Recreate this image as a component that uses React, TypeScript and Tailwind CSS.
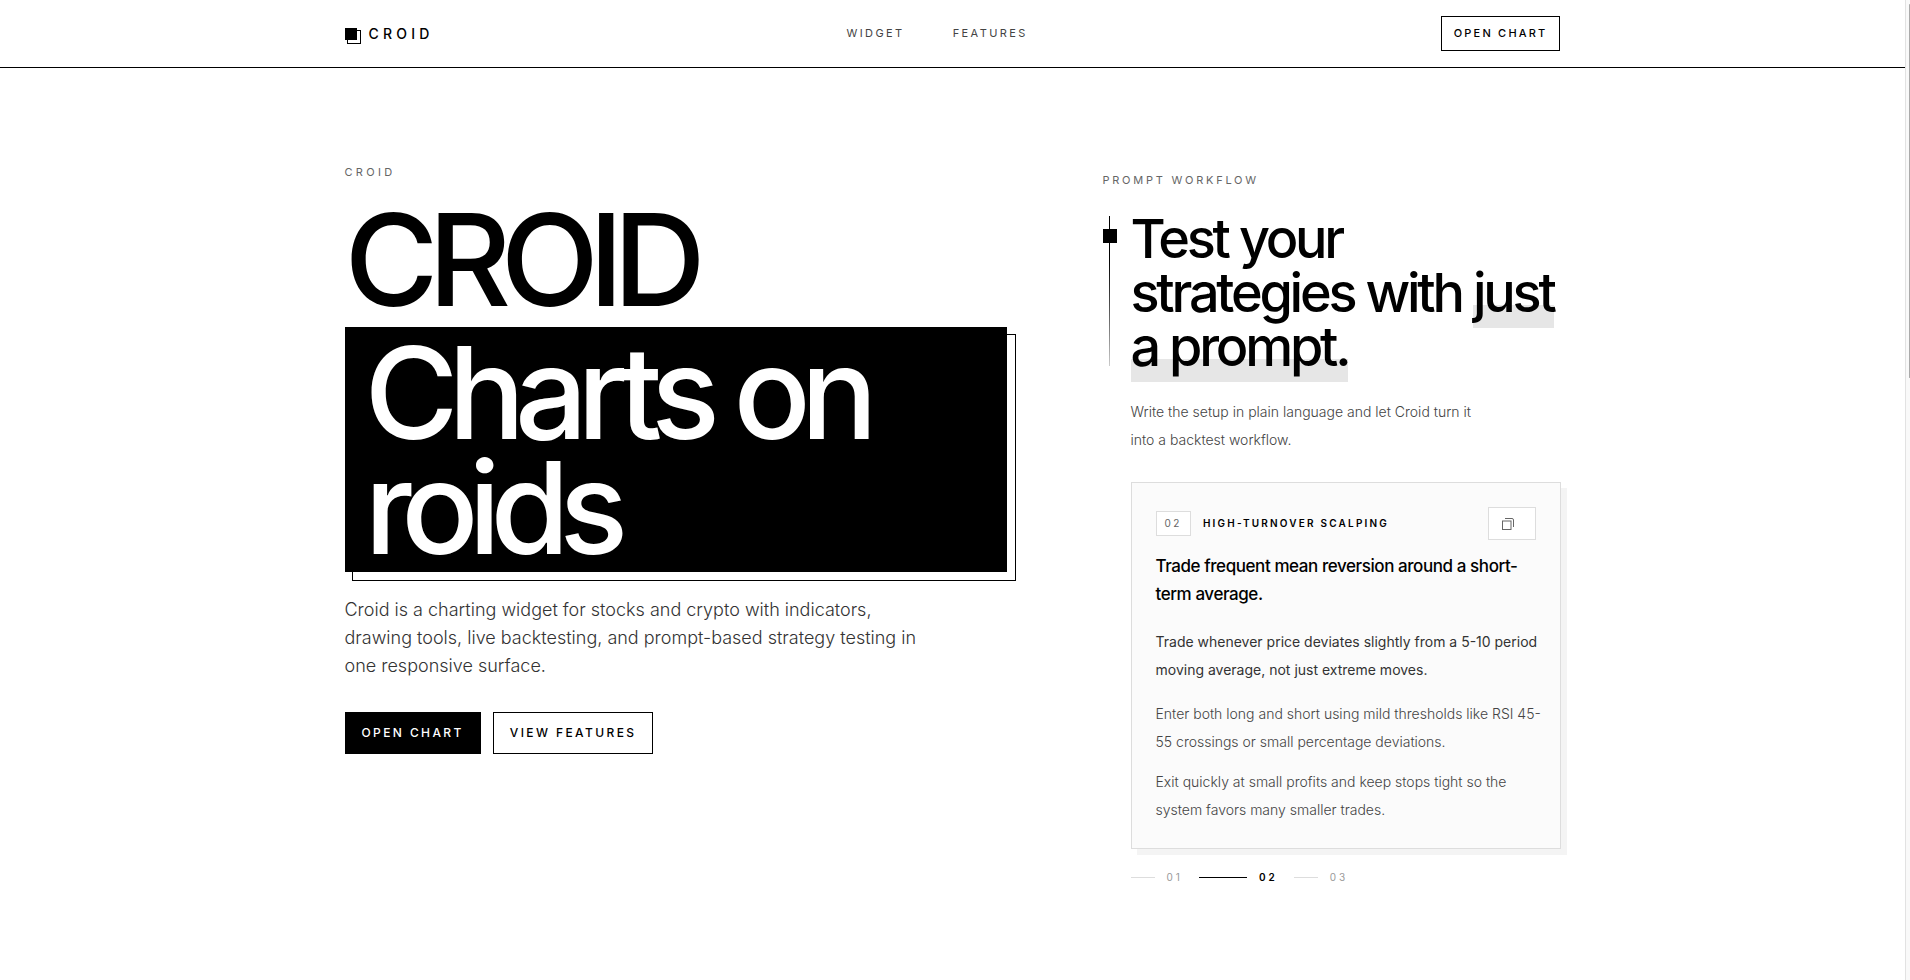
import { useState } from 'react';

const prompts = [
  { id: '01', title: 'TREND' },
  { id: '02', title: 'HIGH-TURNOVER SCALPING' },
  { id: '03', title: 'BREAKOUT' },
];

function Logo() {
  return (
    <a href="#top" className="flex items-end gap-2">
      <svg width="16" height="16" viewBox="0 0 16 16" aria-hidden="true">
        <rect x="2.5" y="2.5" width="13" height="13" fill="none" stroke="#000" />
        <rect width="12" height="12" fill="#000" />
      </svg>
      <span className="text-[14px] leading-5 font-medium tracking-[0.3em]">CROID</span>
    </a>
  );
}

function Header() {
  return (
    <header className="border-b border-black">
      <div className="mx-auto flex max-w-[1280px] items-center justify-between px-8 py-4">
        <Logo />
        <nav className="flex gap-12 text-[11px] tracking-[0.22em] text-[#444]">
          <a href="#widget">WIDGET</a>
          <a href="#features">FEATURES</a>
        </nav>
        <button className="h-[35px] border border-black px-3 text-[11px] font-medium tracking-[0.2em]">OPEN CHART</button>
      </div>
    </header>
  );
}

function Hero() {
  return (
    <div>
      <p className="text-[11px] leading-4 tracking-[0.3em] text-[#666]">CROID</p>
      <h1 className="mt-[22px] text-[128px] leading-[115px] font-medium tracking-[-0.08em]">
        <span className="block">CROID</span>
        <span className="relative mt-[10px] block w-[662px] max-w-full bg-black px-5 pt-2 pb-[7px] text-white before:absolute before:top-[7px] before:-right-[9px] before:-bottom-[9px] before:left-[7px] before:-z-10 before:border before:border-black before:content-['']">
          Charts on roids
        </span>
      </h1>
      <p className="mt-6 max-w-[580px] text-[18px] leading-7 font-light text-[#333]">
        Croid is a charting widget for stocks and crypto with indicators, drawing tools, live backtesting, and prompt-based strategy testing in one responsive surface.
      </p>
      <div className="mt-8 flex gap-3 text-[12px] font-medium">
        <button className="h-[42px] border border-black bg-black px-4 tracking-[0.2em] text-white">OPEN CHART</button>
        <button className="h-[42px] border border-black px-4 tracking-[0.2em]">VIEW FEATURES</button>
      </div>
    </div>
  );
}

function PromptCard({ id, title }: { id: string; title: string }) {
  return (
    <article className="mt-7 border border-[#ddd] bg-[#fbfbfb] py-6 pr-4 pl-6 shadow-[6px_6px_0_#f4f4f4]">
      <div className="flex items-center justify-between pr-2">
        <div className="flex items-center gap-3">
          <span className="border border-[#ddd] bg-white px-2 text-[10px] leading-[23px] tracking-[0.25em] text-[#666]">{id}</span>
          <span className="text-[10px] font-semibold tracking-[0.22em]">{title}</span>
        </div>
        <button aria-label="Copy prompt" className="h-[33px] w-12 border border-[#ddd] bg-white pl-[13px] text-[#666]">
          <svg width="12" height="12" viewBox="0 0 12 12" fill="none" stroke="currentColor" aria-hidden="true">
            <rect x="0.5" y="3" width="8.500" height="8.500" />
            <path d="M3 .5h7q1.5 0 1.5 1.500V9" />
          </svg>
        </button>
      </div>
      <h3 className="mt-3 text-[17px] leading-7 font-medium tracking-tight">Trade frequent mean reversion around a short-term average.</h3>
      <p className="mt-5 text-[14px] leading-7 text-[#333]">
        Trade whenever price deviates slightly from a 5-10 period moving average, not just extreme moves.
      </p>
      <div className="mt-4 space-y-3 text-[14px] leading-7 font-light text-[#444]">
        <p>Enter both long and short using mild thresholds like RSI 45-55 crossings or small percentage deviations.</p>
        <p>Exit quickly at small profits and keep stops tight so the system favors many smaller trades.</p>
      </div>
    </article>
  );
}

function Workflow() {
  const [active, setActive] = useState(1);

  return (
    <div className="pt-2">
      <p className="text-[11px] leading-4 tracking-[0.25em] text-[#666]">PROMPT WORKFLOW</p>
      <div className="mt-6 flex gap-[14px]">
        {/* Rail */}
        <div className="mt-1 flex h-[150px] w-[14px] shrink-0 flex-col items-center">
          <div className="h-[13px] w-px bg-black" />
          <div className="size-[14px] bg-black" />
          <div className="w-px flex-1 bg-linear-to-b from-black to-[#ccc]" />
        </div>
        <div className="min-w-0 flex-1">
          <h2 className="text-[54px] leading-[54px] font-medium tracking-[-0.06em]">
            Test your strategies with{' '}
            <span className="bg-[linear-gradient(transparent_66%,#e6e6e6_66%)] box-decoration-clone pb-[3px]">just a prompt.</span>
          </h2>
          <p className="mt-6 max-w-[352px] text-[14px] leading-7 font-light text-[#444]">
            Write the setup in plain language and let Croid turn it into a backtest workflow.
          </p>
          <PromptCard id={prompts[active].id} title={prompts[active].title} />
          <div className="mt-5 flex items-center gap-4">
            {prompts.map((p, i) => (
              <button
                key={p.id}
                onClick={() => setActive(i)}
                className={i === active ? 'flex items-center gap-3 font-semibold text-black' : 'flex items-center gap-3 text-[#999]'}
              >
                <span className={i === active ? 'h-px w-12 bg-black' : 'h-px w-6 bg-[#ddd]'} />
                <span className="text-[10px] leading-4 tracking-[0.3em]">{p.id}</span>
              </button>
            ))}
          </div>
        </div>
      </div>
    </div>
  );
}

export default function App() {
  return (
    <div id="top" className="flex min-h-screen bg-white font-['Inter',sans-serif] text-black">
      <div className="relative isolate min-w-0 flex-1">
        <Header />
        <main className="mx-auto grid max-w-[1280px] grid-cols-[minmax(0,1fr)_458px] gap-24 px-8 pt-24">
          <Hero />
          <Workflow />
        </main>
      </div>
      {/* Scroll gutter */}
      <div className="flex w-[5px] justify-end border-l border-[#e2e2e2] bg-[#f9f9f9] pt-1">
        <div className="h-[374px] w-px rounded bg-[#aaa]" />
      </div>
    </div>
  );
}
